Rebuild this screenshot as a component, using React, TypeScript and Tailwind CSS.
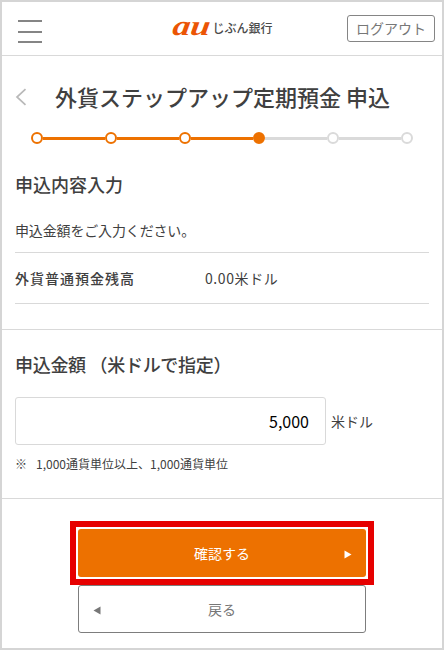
import { useState } from 'react'

const STEPS = 6
const CURRENT_STEP = 3

function Header() {
  return (
    <header className="flex h-[54px] items-start justify-between border-b border-[#d9d9d9] pl-4 pr-[7px]">
      <button aria-label="メニュー" className="mt-[18px] h-[23px] w-6">
        <svg width="24" height="23" viewBox="0 0 24 23" fill="#858585">
          <rect width="24" height="2" y="0" />
          <rect width="24" height="2" y="11" />
          <rect width="24" height="2" y="21" />
        </svg>
      </button>
      <div className="ml-[57px] mt-[12px] flex h-7 items-center">
        <span className="-mt-1 w-[39px] origin-left -skew-x-6 scale-x-[1.27] font-['Liberation_Serif',serif] text-[28px] font-bold italic leading-7 text-[#eb5505]">au</span>
        <span className="text-[12px] font-medium leading-7 text-[#4a4a4a]">じぶん銀行</span>
      </div>
      <button className="mt-[13px] h-[27px] w-[88px] rounded-[3px] border border-[#858585] text-[14px] leading-[25px] text-[#777]">
        ログアウト
      </button>
    </header>
  )
}

function Stepper() {
  return (
    <ol className="mx-[29px] mt-[20px] flex h-3 items-center">
      {Array.from({ length: STEPS }, (_, i) => (
        <li key={i} className={i === 0 ? 'flex items-center' : 'flex flex-1 items-center'}>
          {i > 0 && <span className={`h-[3px] flex-1 ${i <= CURRENT_STEP ? 'bg-[#ed7100]' : 'bg-[#dadada]'}`} />}
          <span
            className={`size-3 rounded-full border-2 ${
              i < CURRENT_STEP
                ? 'border-[#ed7100] bg-white'
                : i === CURRENT_STEP
                  ? 'border-[#ed7100] bg-[#ed7100]'
                  : 'border-[#dadada] bg-white'
            }`}
          />
        </li>
      ))}
    </ol>
  )
}

export default function App() {
  const [amount, setAmount] = useState('5,000')

  return (
    <div className="h-[650px] w-[444px] overflow-hidden border-2 border-[#d5d5d5] bg-white font-['Noto_Sans_CJK_JP',sans-serif] text-[#404040]">
      <Header />

      {/* Title */}
      <div className="mt-[26px] flex h-[30px] items-center pl-[13px]">
        <svg width="12" height="18" viewBox="0 0 12 18" fill="none" stroke="#b9b9b9" strokeWidth="1.7">
          <path d="M10.5 1.2 2 9l8.5 7.8" />
        </svg>
        <h1 className="ml-[28px] mt-[-2px] whitespace-nowrap text-[22px] font-medium leading-[30px]">外貨ステップアップ定期預金 申込</h1>
      </div>
      <Stepper />

      {/* Balance */}
      <section className="border-b border-[#d9d9d9] px-[13px] pb-[25px] pt-[27px]">
        <h2 className="text-[18px] font-medium leading-[26px]">申込内容入力</h2>
        <p className="mt-[23px] text-[14px] leading-5 tracking-[-0.15px]">申込金額をご入力ください。</p>
        <dl className="mt-[12px] flex h-[52px] items-center border-y border-[#d9d9d9] text-[14px] tracking-[1px]">
          <dt className="w-[190px] font-medium">外貨普通預金残高</dt>
          <dd className="tracking-[0.6px]">0.00米ドル</dd>
        </dl>
      </section>

      {/* Amount */}
      <section className="border-b border-[#d9d9d9] px-[13px] pb-[24px] pt-[21px]">
        <h2 className="whitespace-nowrap text-[18px] font-medium leading-[26px] tracking-[-0.3px]">申込金額 （米ドルで指定）</h2>
        <div className="mt-[20px] flex items-center">
          <input
            value={amount}
            onChange={e => setAmount(e.target.value)}
            className="h-12 w-[311px] rounded-[3px] border border-[#d9d9d9] px-4 text-right text-[16px] text-black outline-none"
          />
          <span className="ml-[5px] text-[14px]">米ドル</span>
        </div>
        <p className="mt-[9px] flex text-[12px] leading-5">
          <span className="w-[21px]">※</span>1,000通貨単位以上、1,000通貨単位
        </p>
      </section>

      {/* Buttons */}
      <div className="mt-[22px] flex flex-col items-center">
        <div className="border-[6px] border-[#e60000] p-[2px]">
          <button className="flex h-12 w-[288px] items-center rounded-[3px] bg-[#ed7100] text-[14px] text-white">
            <span className="flex-1 pl-[22px] text-center">確認する</span>
            <svg className="mr-[14px] mt-[3px]" width="8" height="9" viewBox="0 0 8 9" fill="currentColor">
              <path d="M0.5 0.5 7.5 4.5 0.5 8.5z" />
            </svg>
          </button>
        </div>
        <button className="flex h-12 w-[288px] items-center rounded-[3px] border border-[#7d7d7d] text-[14px] text-[#777]">
          <svg className="ml-[14px] mt-[3px]" width="8" height="9" viewBox="0 0 8 9" fill="currentColor">
            <path d="M7.5 0.5 0.5 4.5 7.5 8.5z" />
          </svg>
          <span className="flex-1 pr-[22px] text-center">戻る</span>
        </button>
      </div>
    </div>
  )
}
